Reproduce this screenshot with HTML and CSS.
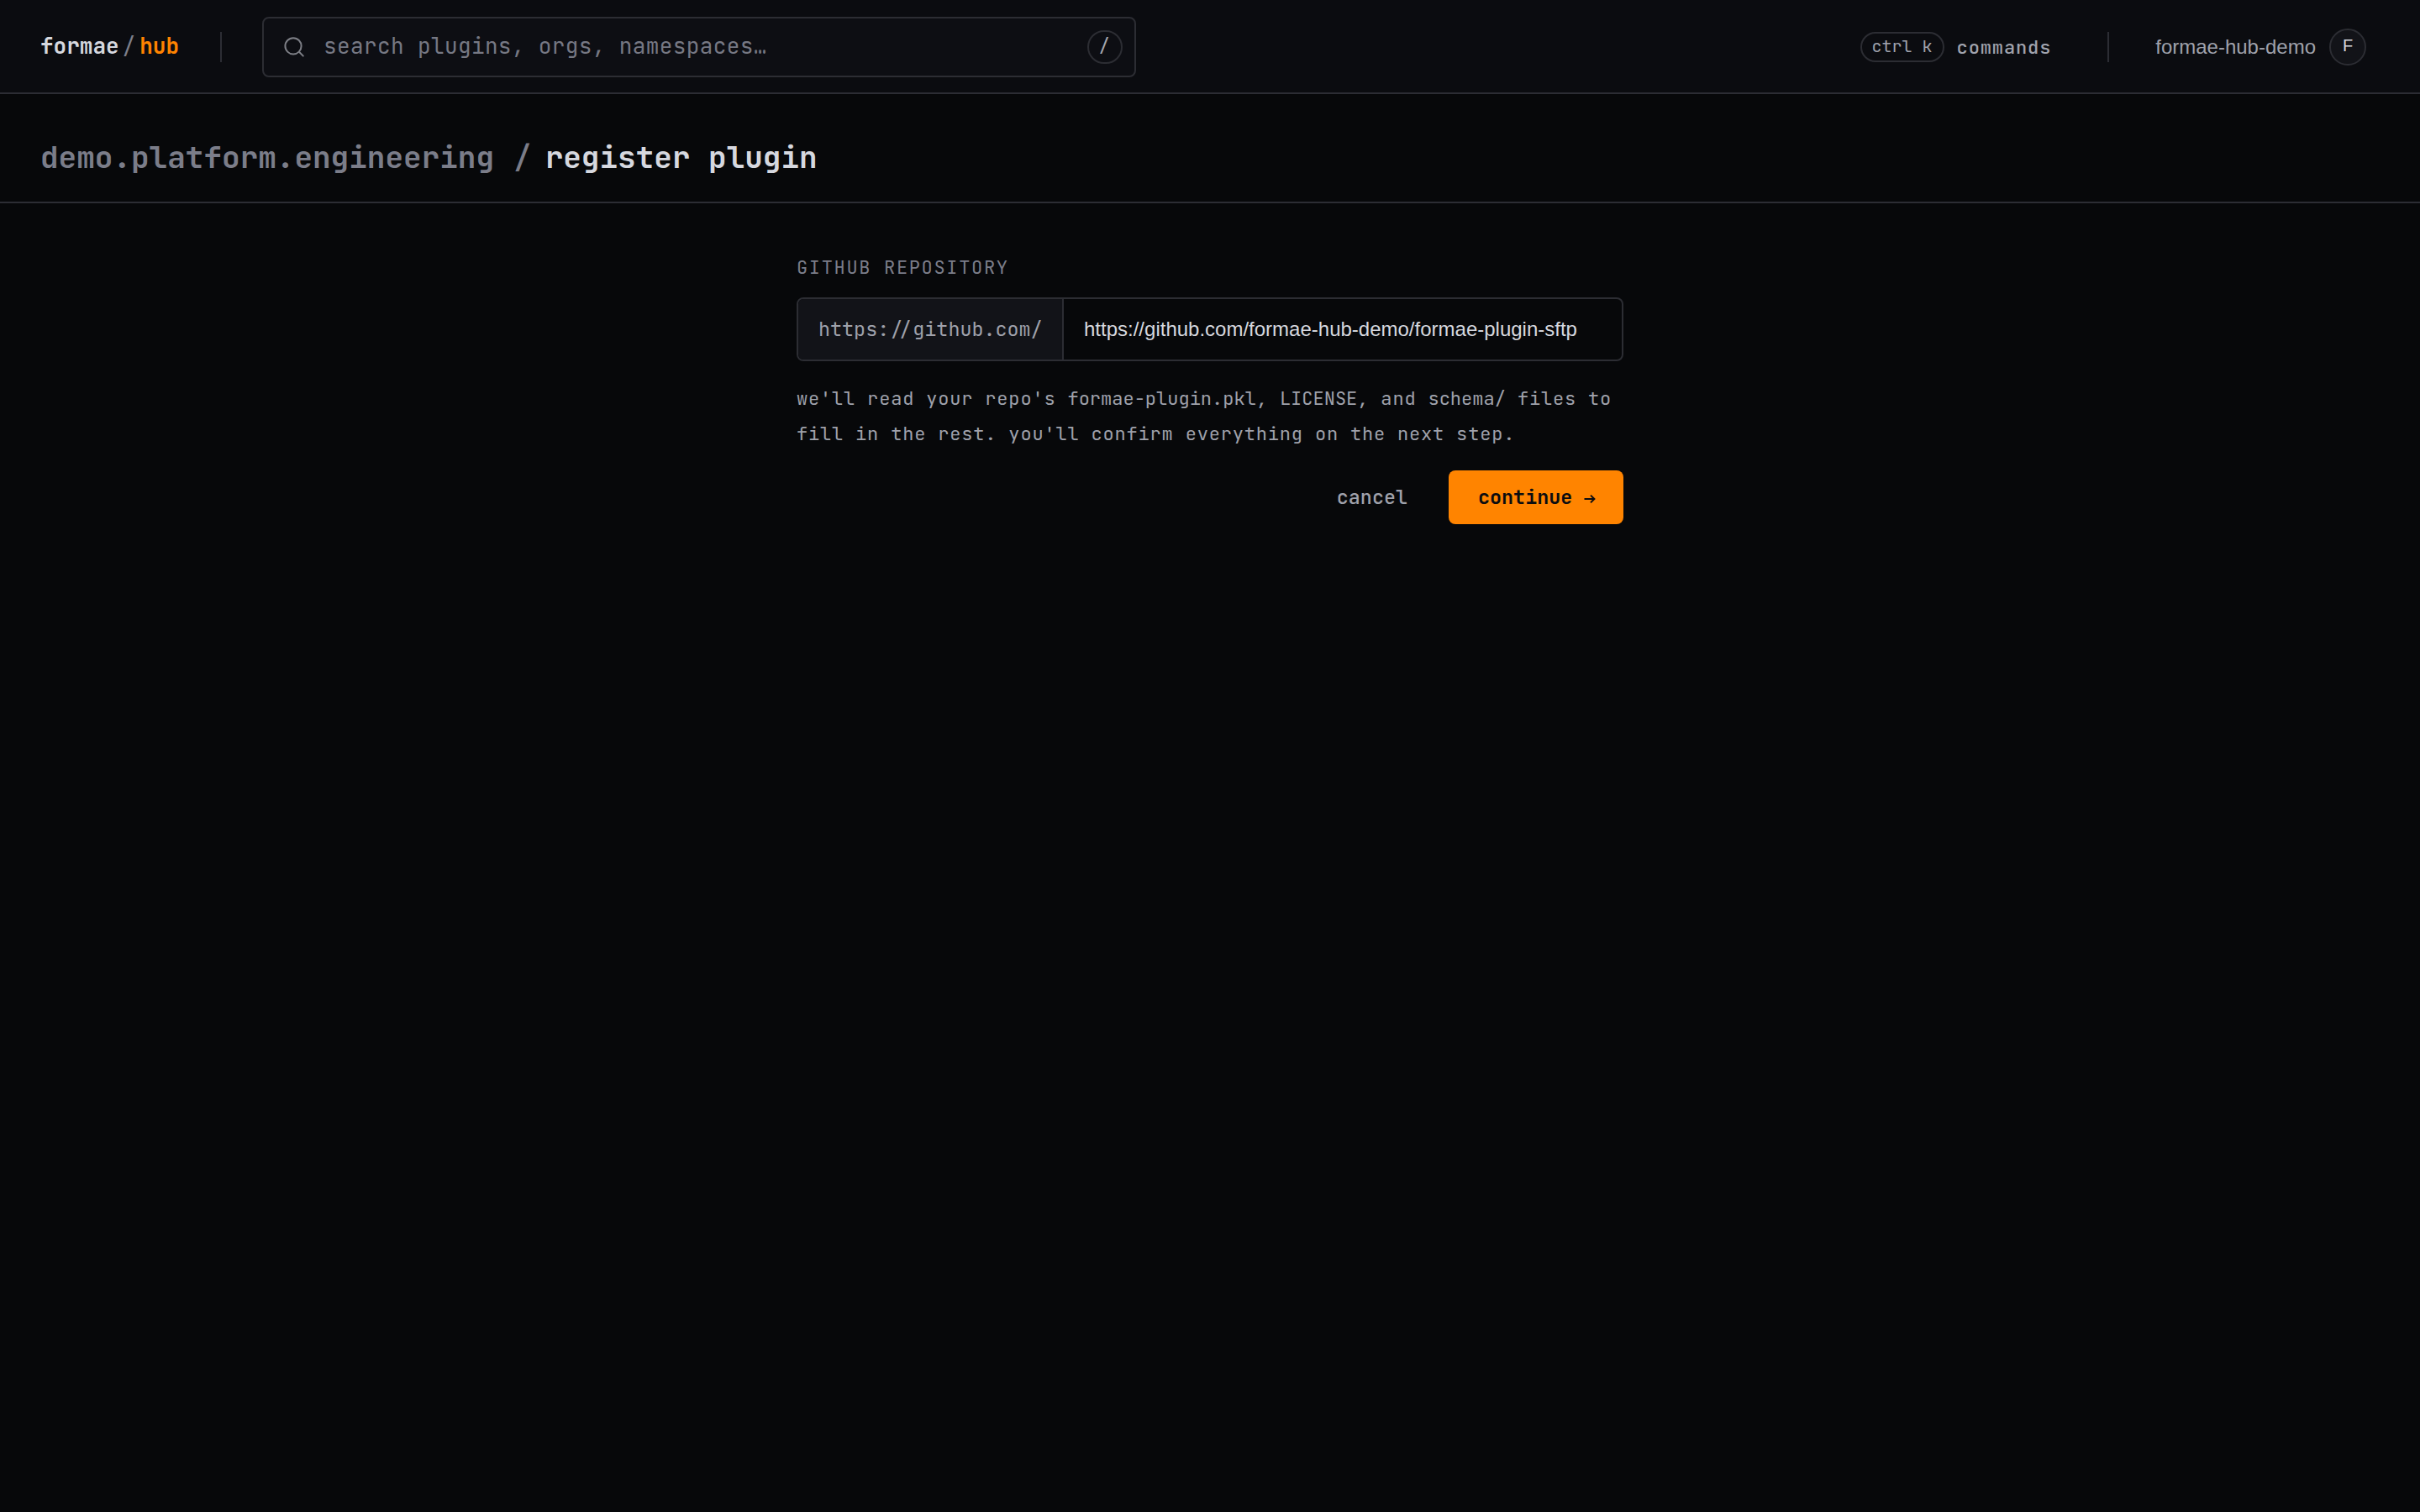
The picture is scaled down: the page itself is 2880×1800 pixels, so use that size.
FILE: index.html
```html
<!DOCTYPE html>
<html lang="en">
<head>
  <meta charset="UTF-8">
  <meta name="viewport" content="width=device-width, initial-scale=1.0">
  <title>register plugin - formae/hub</title>
  <link rel="stylesheet" href="styles.css">
</head>
<body>
  <!-- Top bar -->
  <header class="topbar">
    <a class="logo"><span class="logo-name">formae</span><span class="logo-slash">/</span><span class="logo-hub">hub</span></a>
    <span class="divider"></span>
    <div class="search">
      <svg class="search-icon" viewBox="0 0 28 28" fill="none" stroke="currentColor" stroke-width="2" stroke-linecap="round">
        <circle cx="13" cy="12.8" r="9.6"></circle>
        <path d="M20 19.8l4.8 4.8"></path>
      </svg>
      <span class="search-text">search plugins, orgs, namespaces…</span>
      <kbd class="slash-key">/</kbd>
    </div>
    <div class="commands">
      <kbd class="ctrl-key">ctrl k</kbd>
      <span class="commands-label">commands</span>
    </div>
    <span class="divider"></span>
    <div class="user">
      <span class="user-name">formae-hub-demo</span>
      <span class="avatar">F</span>
    </div>
  </header>

  <!-- Breadcrumb -->
  <div class="crumbs">
    <span class="crumb-org">demo.platform.engineering</span>
    <span class="crumb-slash">/</span>
    <h1 class="crumb-page">register plugin</h1>
  </div>

  <!-- Register form -->
  <main class="register-form">
    <label class="field-label" for="repo">GITHUB REPOSITORY</label>
    <div class="repo-field">
      <span class="repo-prefix">https://github.com/</span>
      <input class="repo-input" type="text" id="repo" value="https://github.com/formae-hub-demo/formae-plugin-sftp">
    </div>
    <p class="help">we'll read your repo's <code>formae-plugin.pkl</code>, <code>LICENSE</code>, and <code>schema/</code> files to<br>fill in the rest. you'll confirm everything on the next step.</p>
    <div class="actions">
      <button class="btn-cancel">cancel</button>
      <button class="btn-continue">continue <svg class="arrow" viewBox="0 0 14 12" fill="none" stroke="currentColor" stroke-width="2"><path d="M0.5 6h11.5M8 1.6l4.4 4.4-4.4 4.4"></path></svg></button>
    </div>
  </main>
</body>
</html>
```
FILE: styles.css
```css
* {
  box-sizing: border-box;
}

body {
  margin: 0;
  min-height: 100vh;
  background-color: #07080a;
  color: #d6d8df;
  font-family: "JetBrains Mono", "DejaVu Sans Mono", monospace;
}

.topbar {
  display: flex;
  align-items: center;
  height: 112px;
  padding: 2px 64px 0 48px;
  background-color: #0b0c10;
  border-bottom: 2px solid #2c2d34;
}

.logo {
  display: flex;
  width: 214px;
  padding-bottom: 2px;
  font-size: 26px;
  font-weight: 600;
  line-height: 34px;
}

.logo-slash {
  margin: 0 5px 0 4px;
  color: #7d7f8a;
  font-weight: 400;
}

.logo-hub {
  color: #ff8400;
}

.divider {
  width: 2px;
  height: 36px;
  background-color: #2c2d34;
}

.search {
  display: flex;
  align-items: center;
  width: 1040px;
  height: 72px;
  margin-left: 48px;
  padding: 0 14px 0 22px;
  background-color: #0d0e13;
  border: 2px solid #2c2d33;
  border-radius: 8px;
}

.search-icon {
  width: 28px;
  height: 28px;
  color: #7d7f86;
}

.search-text {
  flex: 1;
  margin-left: 21px;
  padding-bottom: 2px;
  font-size: 26px;
  line-height: 34px;
  letter-spacing: 0.39px;
  color: #767883;
}

.slash-key {
  width: 42px;
  height: 40px;
  padding-right: 2px;
  border: 2px solid #2c2d33;
  border-radius: 20px;
  font-family: inherit;
  font-size: 22px;
  line-height: 34px;
  text-align: center;
  color: #a6a8b0;
}

.commands {
  display: flex;
  align-items: center;
  margin-left: auto;
  margin-right: 67px;
}

.ctrl-key {
  height: 36px;
  padding: 0 12px;
  border: 2px solid #2c2d33;
  border-radius: 18px;
  font-family: inherit;
  font-size: 20px;
  line-height: 31px;
  color: #a0a3ad;
}

.commands-label {
  margin-left: 15px;
  font-size: 22px;
  font-weight: 500;
  letter-spacing: 0.88px;
  color: #a0a3ad;
}

.user {
  display: flex;
  align-items: center;
  margin-left: 55px;
  font-family: "Liberation Sans", Arial, sans-serif;
}

.user-name {
  font-size: 24px;
  color: #9fa1ab;
}

.avatar {
  width: 44px;
  height: 44px;
  margin-left: 16px;
  background-color: #121318;
  border: 2px solid #2c2d33;
  border-radius: 50%;
  font-size: 20px;
  line-height: 36px;
  text-align: center;
}

.crumbs {
  display: flex;
  align-items: center;
  height: 130px;
  padding: 22px 48px 0;
  border-bottom: 2px solid #2c2d34;
  font-size: 36px;
  font-weight: 600;
  line-height: 48px;
  color: #7b7d89;
}

.crumb-slash {
  margin: 0 16px 0 23px;
  font-weight: 500;
}

.crumb-page {
  margin: 0;
  font-size: 36px;
  font-weight: 600;
  color: #d6d8df;
}

.register-form {
  display: flex;
  flex-direction: column;
  width: 984px;
  margin: 0 auto;
  padding-top: 63px;
}

.field-label {
  height: 49px;
  font-size: 22px;
  line-height: 28px;
  letter-spacing: 1.66px;
  color: #7b7d89;
}

.repo-field {
  display: flex;
  height: 76px;
  border: 2px solid #2c2d33;
  border-radius: 8px;
  overflow: hidden;
}

.repo-prefix {
  width: 316px;
  padding-left: 24px;
  background-color: #121318;
  border-right: 2px solid #2c2d33;
  font-size: 23.4px;
  line-height: 72px;
  white-space: nowrap;
  color: #9fa1ab;
}

.repo-input {
  flex: 1;
  padding: 0 24px;
  background: none;
  border: none;
  outline: none;
  font-family: "Liberation Sans", Arial, sans-serif;
  font-size: 24px;
  color: #d6d8df;
}

.help {
  margin: 24px 0 0;
  font-size: 22px;
  line-height: 42px;
  letter-spacing: 0.82px;
  white-space: nowrap;
  color: #9fa1ab;
}

.help code {
  font-family: inherit;
  font-size: 22px;
  letter-spacing: 0;
}

.actions {
  display: flex;
  justify-content: flex-end;
  margin-top: 22px;
}

button {
  height: 64px;
  padding: 0 34px 2px;
  background: none;
  border: none;
  font-family: inherit;
  font-size: 23.4px;
  font-weight: 500;
}

.btn-cancel {
  margin-right: 15px;
  color: #9fa1ab;
}

.btn-continue {
  width: 208px;
  padding-left: 35px;
  background-color: #ff8400;
  border-radius: 8px;
  font-weight: 600;
  text-align: left;
  white-space: nowrap;
  color: #0b0c10;
}

.arrow {
  width: 14px;
  height: 12px;
}
```
